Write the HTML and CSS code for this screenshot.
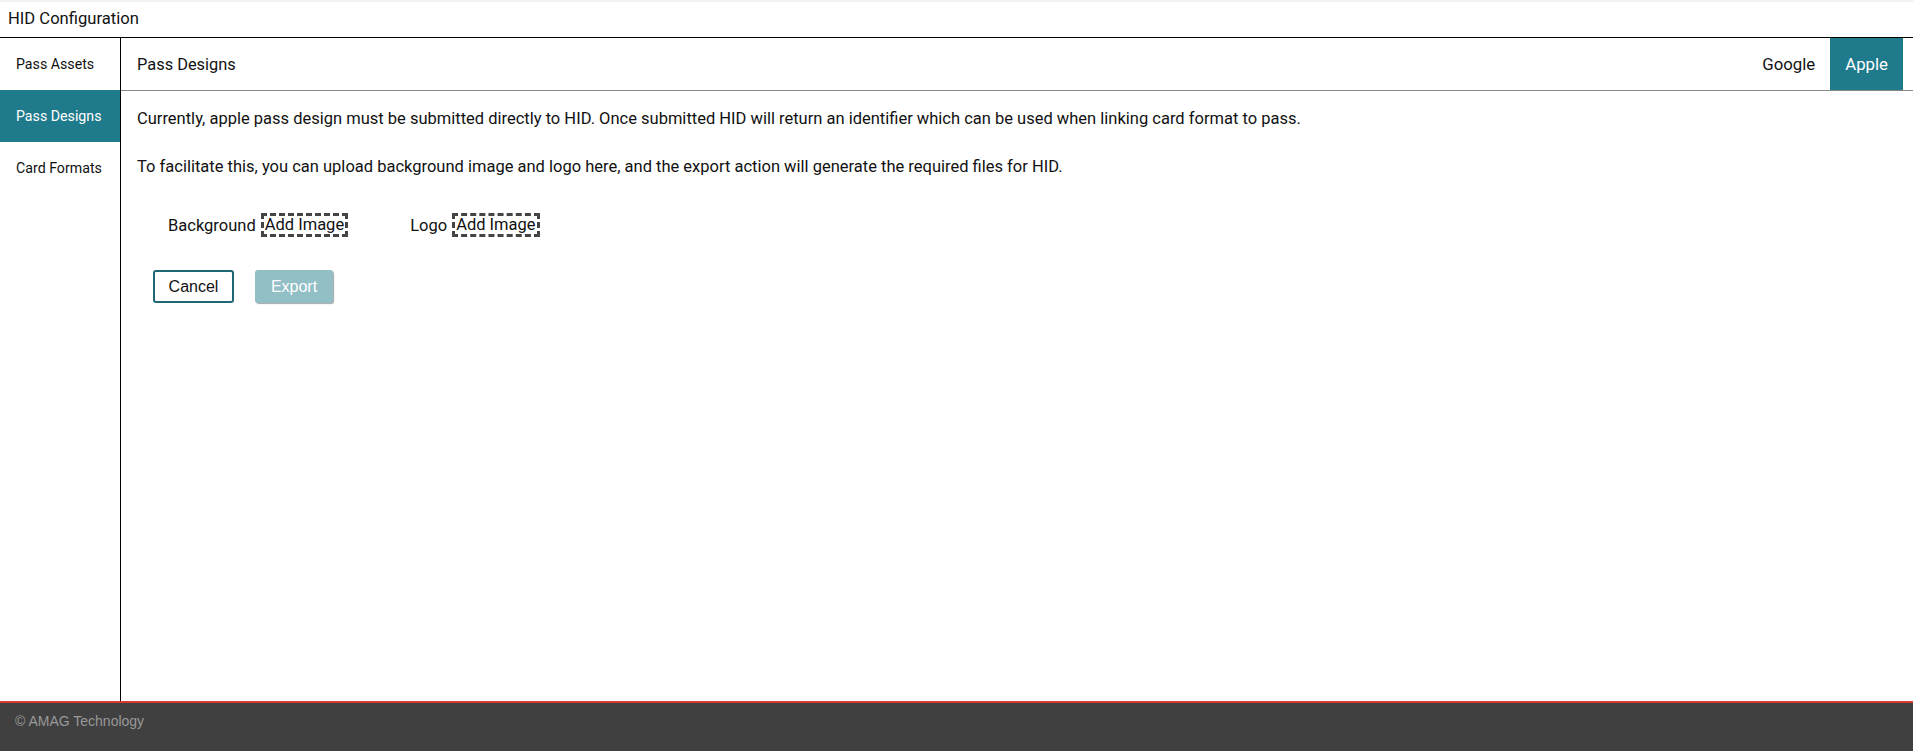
FILE: index.html
```html
<!DOCTYPE html>
<html lang="en">
<head>
    <meta charset="UTF-8">
    <meta name="viewport" content="width=device-width, initial-scale=1.0">
    <title>HID Configuration</title>
    <link rel="stylesheet" href="styles.css">
</head>
<body>
    <div class="page">
        <header class="app-header">HID Configuration</header>
        <div class="layout">
            <nav class="sidebar">
                <a class="nav-item">Pass Assets</a>
                <a class="nav-item active">Pass Designs</a>
                <a class="nav-item">Card Formats</a>
            </nav>
            <main class="content">
                <div class="content-header">
                    <h2>Pass Designs</h2>
                    <div class="tabs">
                        <button class="tab">Google</button>
                        <button class="tab active">Apple</button>
                    </div>
                </div>
                <div class="content-body">
                    <p>Currently, apple pass design must be submitted directly to HID. Once submitted HID will return an identifier which can be used when linking card format to pass.</p>
                    <p>To facilitate this, you can upload background image and logo here, and the export action will generate the required files for HID.</p>
                    <div class="uploads">
                        <div class="upload">
                            <span class="upload-label">Background</span>
                            <span class="add-image">Add Image</span>
                        </div>
                        <div class="upload">
                            <span class="upload-label">Logo</span>
                            <span class="add-image">Add Image</span>
                        </div>
                    </div>
                    <div class="actions">
                        <button class="btn btn-cancel">Cancel</button>
                        <button class="btn btn-export" disabled>Export</button>
                    </div>
                </div>
            </main>
        </div>
        <footer class="footer">&copy; AMAG Technology</footer>
    </div>
</body>
</html>
```

FILE: styles.css
```css
* {
    box-sizing: border-box;
    margin: 0;
    padding: 0;
}
html, body {
    height: 100%;
}
body {
    font-family: Roboto, 'Liberation Sans', sans-serif;
    color: #111;
    background-color: #fff;
}
.page {
    display: flex;
    flex-direction: column;
    height: 100%;
}
.app-header {
    height: 38px;
    padding: 7px 8px 0;
    font-size: 16.6px;
    border-top: 2px solid #f2f2f2;
    border-bottom: 1px solid #000;
}
.layout {
    flex: 1;
    display: flex;
    min-height: 0;
}
.sidebar {
    width: 121px;
    border-right: 1px solid #000;
    display: flex;
    flex-direction: column;
}
.nav-item {
    height: 52px;
    display: flex;
    align-items: center;
    padding-left: 16px;
    font-size: 14.2px;
    color: #111;
    cursor: pointer;
}
.nav-item.active {
    background-color: #1f7a8c;
    color: #fff;
}
.content {
    flex: 1;
    display: flex;
    flex-direction: column;
}
.content-header {
    height: 53px;
    display: flex;
    align-items: stretch;
    justify-content: space-between;
    border-bottom: 1px solid #888;
    padding-left: 16px;
    padding-right: 10px;
}
.content-header h2 {
    font-size: 16.4px;
    font-weight: normal;
    align-self: center;
}
.tabs {
    display: flex;
}
.tab {
    border: none;
    background: none;
    font-family: Roboto, 'Liberation Sans', sans-serif;
    font-size: 16.8px;
    color: #111;
    padding: 0 15px;
    cursor: pointer;
}
.tab.active {
    background-color: #1f7a8c;
    color: #fff;
}
.content-body {
    padding: 18px 16px;
}
.content-body p {
    font-size: 16.5px;
    line-height: 19px;
    margin-bottom: 29px;
}
.uploads {
    display: flex;
    gap: 62px;
    padding-left: 31px;
    margin-top: 37px;
}
.upload {
    display: flex;
    align-items: center;
    gap: 5px;
    font-size: 16.5px;
}
.add-image {
    border: 3px dashed #444;
    padding: 0 1px;
    line-height: 18px;
}
.actions {
    display: flex;
    gap: 21px;
    padding-left: 16px;
    margin-top: 33px;
}
.btn {
    font-family: 'Liberation Sans', Arial, sans-serif;
    font-size: 16px;
    height: 33px;
    border-radius: 3px;
    cursor: pointer;
}
.btn-cancel {
    width: 81px;
    background: #fff;
    color: #111;
    border: 2px solid #1f6675;
}
.btn-export {
    width: 78px;
    background-color: #92bec6;
    color: #fff;
    border: none;
    box-shadow: 1px 1px 1px rgba(0, 0, 0, 0.35);
    cursor: default;
}
.footer {
    height: 50px;
    background-color: #404040;
    border-top: 2px solid #d63a2f;
    color: #999;
    font-family: 'Liberation Sans', Arial, sans-serif;
    font-size: 14px;
    padding: 10px 15px;
}
```
